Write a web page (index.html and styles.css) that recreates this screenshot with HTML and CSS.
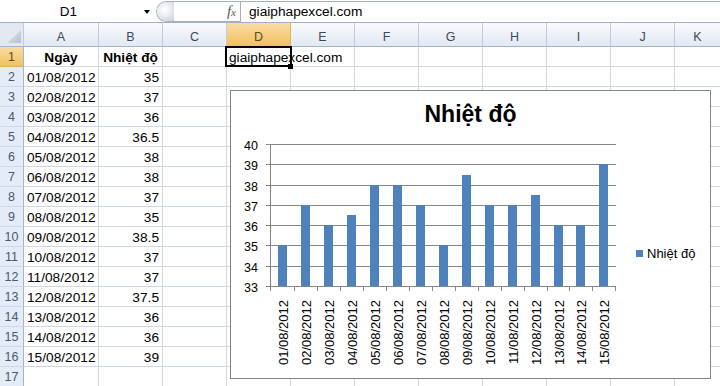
FILE: index.html
```html
<!DOCTYPE html>
<html>
<head>
<meta charset="utf-8">
<title>Nhiệt độ</title>
<link rel="stylesheet" href="styles.css">
</head>
<body>
<div class="app">
  <div class="fbar">
    <div class="namebox"><span class="ref">D1</span><span class="arrow"></span></div>
    <div class="fxgroup"><span class="orb"></span><span class="fx"><i class="f">f</i><i class="x">x</i></span></div>
    <div class="finput">giaiphapexcel.com</div>
  </div>
  <div class="sheet">
    <div class="corner"><span class="tri"></span></div>
    <div class="ch">A</div><div class="ch">B</div><div class="ch">C</div><div class="ch sel">D</div><div class="ch">E</div><div class="ch">F</div><div class="ch">G</div><div class="ch">H</div><div class="ch">I</div><div class="ch">J</div><div class="ch">K</div>

    <div class="rh sel">1</div><div class="c b">Ngày</div><div class="c b">Nhiệt độ</div><div class="c"></div><div class="c ov">giaiphapexcel.com</div><div class="c"></div><div class="c"></div><div class="c"></div><div class="c"></div><div class="c"></div><div class="c"></div><div class="c"></div>
    <div class="rh">2</div><div class="c d">01/08/2012</div><div class="c n">35</div><div class="c"></div><div class="c"></div><div class="c"></div><div class="c"></div><div class="c"></div><div class="c"></div><div class="c"></div><div class="c"></div><div class="c"></div>
    <div class="rh">3</div><div class="c d">02/08/2012</div><div class="c n">37</div><div class="c"></div><div class="c"></div><div class="c"></div><div class="c"></div><div class="c"></div><div class="c"></div><div class="c"></div><div class="c"></div><div class="c"></div>
    <div class="rh">4</div><div class="c d">03/08/2012</div><div class="c n">36</div><div class="c"></div><div class="c"></div><div class="c"></div><div class="c"></div><div class="c"></div><div class="c"></div><div class="c"></div><div class="c"></div><div class="c"></div>
    <div class="rh">5</div><div class="c d">04/08/2012</div><div class="c n">36.5</div><div class="c"></div><div class="c"></div><div class="c"></div><div class="c"></div><div class="c"></div><div class="c"></div><div class="c"></div><div class="c"></div><div class="c"></div>
    <div class="rh">6</div><div class="c d">05/08/2012</div><div class="c n">38</div><div class="c"></div><div class="c"></div><div class="c"></div><div class="c"></div><div class="c"></div><div class="c"></div><div class="c"></div><div class="c"></div><div class="c"></div>
    <div class="rh">7</div><div class="c d">06/08/2012</div><div class="c n">38</div><div class="c"></div><div class="c"></div><div class="c"></div><div class="c"></div><div class="c"></div><div class="c"></div><div class="c"></div><div class="c"></div><div class="c"></div>
    <div class="rh">8</div><div class="c d">07/08/2012</div><div class="c n">37</div><div class="c"></div><div class="c"></div><div class="c"></div><div class="c"></div><div class="c"></div><div class="c"></div><div class="c"></div><div class="c"></div><div class="c"></div>
    <div class="rh">9</div><div class="c d">08/08/2012</div><div class="c n">35</div><div class="c"></div><div class="c"></div><div class="c"></div><div class="c"></div><div class="c"></div><div class="c"></div><div class="c"></div><div class="c"></div><div class="c"></div>
    <div class="rh">10</div><div class="c d">09/08/2012</div><div class="c n">38.5</div><div class="c"></div><div class="c"></div><div class="c"></div><div class="c"></div><div class="c"></div><div class="c"></div><div class="c"></div><div class="c"></div><div class="c"></div>
    <div class="rh">11</div><div class="c d">10/08/2012</div><div class="c n">37</div><div class="c"></div><div class="c"></div><div class="c"></div><div class="c"></div><div class="c"></div><div class="c"></div><div class="c"></div><div class="c"></div><div class="c"></div>
    <div class="rh">12</div><div class="c d">11/08/2012</div><div class="c n">37</div><div class="c"></div><div class="c"></div><div class="c"></div><div class="c"></div><div class="c"></div><div class="c"></div><div class="c"></div><div class="c"></div><div class="c"></div>
    <div class="rh">13</div><div class="c d">12/08/2012</div><div class="c n">37.5</div><div class="c"></div><div class="c"></div><div class="c"></div><div class="c"></div><div class="c"></div><div class="c"></div><div class="c"></div><div class="c"></div><div class="c"></div>
    <div class="rh">14</div><div class="c d">13/08/2012</div><div class="c n">36</div><div class="c"></div><div class="c"></div><div class="c"></div><div class="c"></div><div class="c"></div><div class="c"></div><div class="c"></div><div class="c"></div><div class="c"></div>
    <div class="rh">15</div><div class="c d">14/08/2012</div><div class="c n">36</div><div class="c"></div><div class="c"></div><div class="c"></div><div class="c"></div><div class="c"></div><div class="c"></div><div class="c"></div><div class="c"></div><div class="c"></div>
    <div class="rh">16</div><div class="c d">15/08/2012</div><div class="c n">39</div><div class="c"></div><div class="c"></div><div class="c"></div><div class="c"></div><div class="c"></div><div class="c"></div><div class="c"></div><div class="c"></div><div class="c"></div>
    <div class="rh">17</div><div class="c"></div><div class="c"></div><div class="c"></div><div class="c"></div><div class="c"></div><div class="c"></div><div class="c"></div><div class="c"></div><div class="c"></div><div class="c"></div><div class="c"></div>
  </div>

  <div class="selection"><span class="handle"></span></div>

  <div class="chart">
    <div class="ctitle">Nhiệt độ</div>
    <div class="cbody">
      <svg class="plot" width="392" height="241" viewBox="0 0 392 241">
        <path class="grid" d="M35 7.5H385M35 27.5H385M35 48.5H385M35 68.5H385M35 88.5H385M35 108.5H385M35 129.5H385"/>
        <g class="bars">
          <rect x="47" y="108" width="9" height="41"/>
          <rect x="70" y="68" width="9" height="81"/>
          <rect x="93" y="88" width="9" height="61"/>
          <rect x="116" y="78" width="9" height="71"/>
          <rect x="139" y="48" width="9" height="101"/>
          <rect x="162" y="48" width="9" height="101"/>
          <rect x="185" y="68" width="9" height="81"/>
          <rect x="208" y="108" width="9" height="41"/>
          <rect x="231" y="38" width="9" height="111"/>
          <rect x="254" y="68" width="9" height="81"/>
          <rect x="277" y="68" width="9" height="81"/>
          <rect x="300" y="58" width="9" height="91"/>
          <rect x="323" y="88" width="9" height="61"/>
          <rect x="345" y="88" width="9" height="61"/>
          <rect x="368" y="27" width="9" height="122"/>
        </g>
        <path class="axis" d="M39.5 7V149.5M35 149.5H385M39.5 149.5V154M63.5 149.5V154M86.5 149.5V154M109.5 149.5V154M132.5 149.5V154M155.5 149.5V154M178.5 149.5V154M201.5 149.5V154M224.5 149.5V154M247.5 149.5V154M270.5 149.5V154M293.5 149.5V154M316.5 149.5V154M338.5 149.5V154M361.5 149.5V154M384.5 149.5V154"/>
        <g class="ylab">
          <text x="27" y="12.5">40</text>
          <text x="27" y="32.5">39</text>
          <text x="27" y="53.5">38</text>
          <text x="27" y="73.5">37</text>
          <text x="27" y="93.5">36</text>
          <text x="27" y="113.5">35</text>
          <text x="27" y="134.5">34</text>
          <text x="27" y="154.5">33</text>
        </g>
        <g class="xlab">
          <text transform="translate(56.5 163) rotate(-90)">01/08/2012</text>
          <text transform="translate(79.5 163) rotate(-90)">02/08/2012</text>
          <text transform="translate(102.5 163) rotate(-90)">03/08/2012</text>
          <text transform="translate(125.5 163) rotate(-90)">04/08/2012</text>
          <text transform="translate(148.5 163) rotate(-90)">05/08/2012</text>
          <text transform="translate(171.5 163) rotate(-90)">06/08/2012</text>
          <text transform="translate(194.5 163) rotate(-90)">07/08/2012</text>
          <text transform="translate(217.5 163) rotate(-90)">08/08/2012</text>
          <text transform="translate(240.5 163) rotate(-90)">09/08/2012</text>
          <text transform="translate(263.5 163) rotate(-90)">10/08/2012</text>
          <text transform="translate(286.5 163) rotate(-90)">11/08/2012</text>
          <text transform="translate(309.5 163) rotate(-90)">12/08/2012</text>
          <text transform="translate(332.5 163) rotate(-90)">13/08/2012</text>
          <text transform="translate(354.5 163) rotate(-90)">14/08/2012</text>
          <text transform="translate(377.5 163) rotate(-90)">15/08/2012</text>
        </g>
      </svg>
      <div class="legend"><span class="sw"></span><span class="ltext">Nhiệt độ</span></div>
    </div>
  </div>
</div>
</body>
</html>
```

FILE: styles.css
```css
* { box-sizing: border-box; }
html, body { margin: 0; padding: 0; }
body {
  width: 720px;
  height: 386px;
  overflow: hidden;
  background: #fff;
  font-family: "Liberation Sans", Arial, sans-serif;
  font-size: 13.7px;
  color: #000;
}
.app { position: relative; width: 720px; height: 386px; overflow: hidden; }

/* formula bar */
.fbar {
  display: flex;
  height: 23px;
  padding-top: 1px;
  border-bottom: 1px solid #a3b1c4;
  background: #fff;
}
.namebox { width: 156px; display: flex; align-items: center; }
.ref { width: 137px; text-align: center; line-height: 21px; font-size: 13.5px; }
.arrow {
  margin-left: 7px;
  width: 0; height: 0;
  border-left: 3.5px solid transparent;
  border-right: 3.5px solid transparent;
  border-top: 4px solid #000;
  margin-top: 1px;
}
.fxgroup {
  width: 84px;
  height: 21px;
  display: flex;
  align-items: center;
  justify-content: space-between;
  border: 1px solid #a6b0be;
  border-right: none;
  border-radius: 11px 0 0 11px;
  background: #fff;
}
.orb {
  width: 17px; height: 19px;
  border-radius: 10px 0 0 10px;
  background: radial-gradient(circle at 45% 40%, #ffffff 0, #eef1f5 35%, #c7d0db 100%);
}
.fx { padding-right: 4px; font-family: "Liberation Serif", serif; color: #5a5a5a; line-height: 19px; }
.fx .f { font-size: 15px; }
.fx .x { font-size: 11px; }
.finput {
  flex: 1;
  height: 21px;
  border-left: 1px solid #a6b0be;
  border-top: 1px solid #a6b0be;
  padding-left: 8px;
  line-height: 20px;
  white-space: nowrap;
}

/* sheet */
.sheet {
  display: grid;
  grid-template-columns: 24px 75px repeat(9, 64px) 46px;
  grid-template-rows: 24px repeat(17, 20px);
}
.corner, .ch {
  background: linear-gradient(#f8fafd, #e2e9f2);
  border-right: 1px solid #c0cad8;
  border-bottom: 1px solid #9eb6ce;
}
.corner { position: relative; background: #e2e9f3; }
.tri {
  position: absolute;
  right: 2px; bottom: 3px;
  width: 14px; height: 13px;
  background: linear-gradient(135deg, #e6ebf1, #b4bfcd);
  clip-path: polygon(100% 0, 100% 100%, 0 100%);
}
.ch {
  text-align: center;
  padding-top: 4px;
  line-height: 20px;
  font-size: 12.5px;
  color: #3f4959;
}
.ch.sel {
  background: linear-gradient(#f9dca3, #f1c15f);
  border-right-color: #e3b25a;
  border-bottom-color: #d8a040;
  color: #5b4a23;
}
.rh {
  background: #e4ecf7;
  border-right: 1px solid #9eb6ce;
  border-bottom: 1px solid #cfd9e6;
  text-align: center;
  padding-top: 1px;
  line-height: 19px;
  font-size: 12.5px;
  color: #4a586c;
}
.rh.sel {
  background: linear-gradient(#f9dca3, #f1c35f);
  border-bottom-color: #e0b060;
  color: #5b4a23;
}
.c {
  border-right: 1px solid #d0d7e5;
  border-bottom: 1px solid #d0d7e5;
  padding-top: 1px;
  line-height: 19px;
  white-space: nowrap;
}
.c.b { font-weight: bold; text-align: center; }
.c.d { padding-left: 3px; }
.c.n { text-align: right; padding-right: 3px; }
.c.ov { overflow: visible; padding-left: 2px; }

/* active cell */
.selection {
  position: absolute;
  left: 225px; top: 46px;
  width: 67px; height: 21px;
  border: 2px solid #000;
}
.handle {
  position: absolute;
  left: 61px; top: 16px;
  width: 5px; height: 5px;
  background: #000;
}

/* chart */
.chart {
  position: absolute;
  left: 230px; top: 90px;
  width: 481px; height: 289px;
  border: 1px solid #868686;
  background: #fff;
  display: flex;
  flex-direction: column;
}
.ctitle {
  height: 46px;
  line-height: 46px;
  text-align: center;
  font-weight: bold;
  font-size: 23px;
}
.cbody { flex: 1; display: flex; }
.plot { display: block; flex: none; }
.plot .grid, .plot .axis { stroke: #868686; stroke-width: 1; fill: none; shape-rendering: crispEdges; }
.plot .bars { fill: #4f81bd; }
.plot text { font-family: "Liberation Sans", Arial, sans-serif; fill: #000; }
.plot .ylab text { font-size: 12.5px; text-anchor: end; }
.plot .xlab text { font-size: 13px; text-anchor: end; }
.legend {
  flex: 1;
  display: flex;
  align-items: center;
  gap: 4px;
  padding-left: 13px;
  padding-bottom: 8px;
  font-size: 13px;
}
.sw { width: 7px; height: 7px; background: #4f81bd; flex: none; }
```
